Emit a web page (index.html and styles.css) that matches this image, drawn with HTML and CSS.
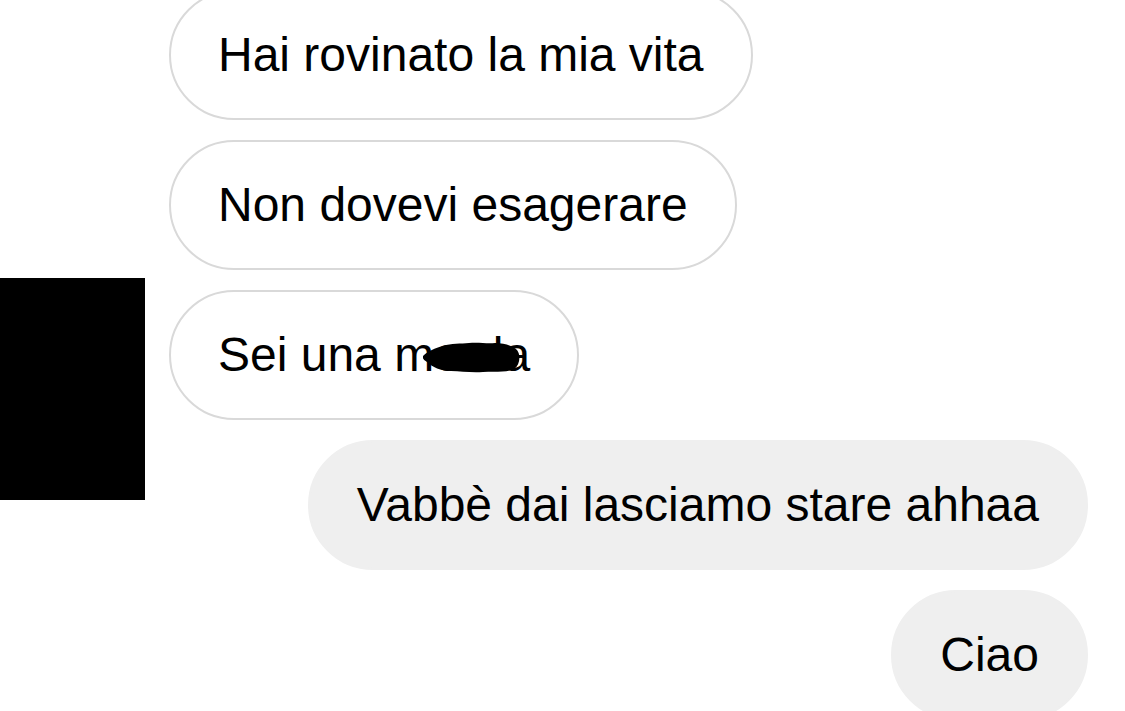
FILE: index.html
```html
<!DOCTYPE html>
<html lang="it">
<head>
    <meta charset="UTF-8">
    <meta name="viewport" content="width=device-width, initial-scale=1.0">
    <title>Chat</title>
    <link rel="stylesheet" href="styles.css">
</head>
<body>
    <div class="thread">
        <div class="msg msg-in">Hai rovinato la mia vita</div>
        <div class="msg msg-in">Non dovevi esagerare</div>
        <div class="msg msg-in">Sei una m<span class="censored">erda<svg class="scribble" width="100" height="34" viewBox="0 0 100 34"><path d="M0 15 C5 10 12 7 20 5 C28 2 38 3 46 2 C56 1 64 3 72 2 C82 2 90 5 94 9 C98 14 97 24 91 28 C83 32 70 30 60 31 C48 32 38 30 28 30 C18 30 9 26 4 21 C1 19 -1 17 0 15 Z"/></svg></span></div>
        <div class="msg msg-out">Vabbè dai lasciamo stare ahhaa</div>
        <div class="msg msg-out">Ciao</div>
    </div>
    <div class="redact"></div>
</body>
</html>
```

FILE: styles.css
```css
body {
    margin: 0;
    background: #fff;
    font-family: "Liberation Sans", Arial, sans-serif;
    color: #000;
    overflow: hidden;
}
.thread {
    display: flex;
    flex-direction: column;
    gap: 20px;
    margin-top: -10px;
    padding: 0 37px 0 169px;
}
.msg {
    font-size: 48px;
    line-height: 58px;
    padding: 34px 47px 34px 47px;
    border-radius: 65px;
    border: 2px solid transparent;
    white-space: nowrap;
}
.msg-in {
    align-self: flex-start;
    background: #fff;
    border-color: #d9d9d9;
}
.msg-out {
    align-self: flex-end;
    background: #efefef;
    border-color: #efefef;
}
.censored {
    position: relative;
}
.scribble {
    position: absolute;
    left: -11px;
    top: 13px;
    fill: #000;
}
.redact {
    position: absolute;
    left: 0;
    top: 278px;
    width: 145px;
    height: 222px;
    background: #000;
}
```
